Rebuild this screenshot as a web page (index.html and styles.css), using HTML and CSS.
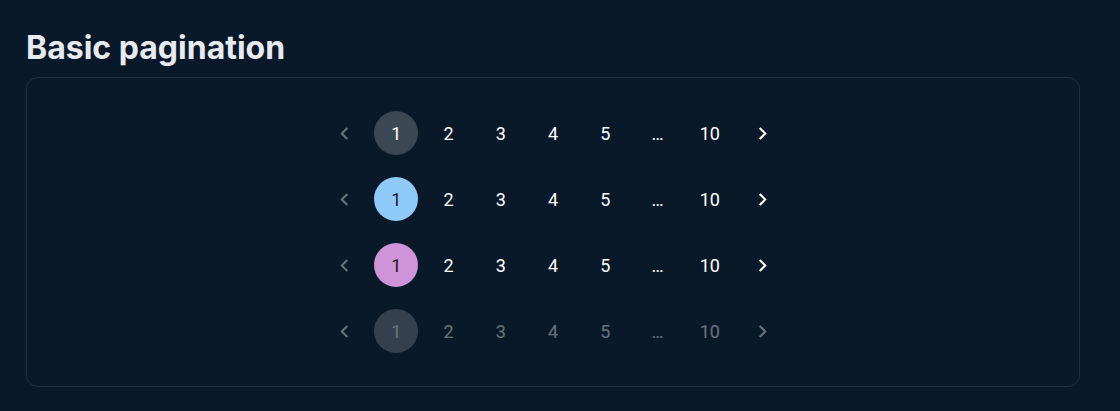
FILE: index.html
```html
<!DOCTYPE html>
<html lang="en">
<head>
  <meta charset="UTF-8">
  <title>Basic pagination</title>
  <link rel="stylesheet" href="styles.css">
</head>
<body>
  <h2 class="title">Basic pagination</h2>

  <div class="demo">
    <nav class="pagination">
      <span class="item arrow off"><svg viewBox="0 0 24 24"><path d="M15.41 7.41 14 6l-6 6 6 6 1.41-1.41L10.83 12z"/></svg></span>
      <span class="item current">1</span>
      <span class="item">2</span>
      <span class="item">3</span>
      <span class="item">4</span>
      <span class="item">5</span>
      <span class="item">…</span>
      <span class="item">10</span>
      <span class="item arrow"><svg viewBox="0 0 24 24"><path d="M10 6 8.59 7.41 13.17 12l-4.58 4.59L10 18l6-6z"/></svg></span>
    </nav>

    <nav class="pagination primary">
      <span class="item arrow off"><svg viewBox="0 0 24 24"><path d="M15.41 7.41 14 6l-6 6 6 6 1.41-1.41L10.83 12z"/></svg></span>
      <span class="item current">1</span>
      <span class="item">2</span>
      <span class="item">3</span>
      <span class="item">4</span>
      <span class="item">5</span>
      <span class="item">…</span>
      <span class="item">10</span>
      <span class="item arrow"><svg viewBox="0 0 24 24"><path d="M10 6 8.59 7.41 13.17 12l-4.58 4.59L10 18l6-6z"/></svg></span>
    </nav>

    <nav class="pagination secondary">
      <span class="item arrow off"><svg viewBox="0 0 24 24"><path d="M15.41 7.41 14 6l-6 6 6 6 1.41-1.41L10.83 12z"/></svg></span>
      <span class="item current">1</span>
      <span class="item">2</span>
      <span class="item">3</span>
      <span class="item">4</span>
      <span class="item">5</span>
      <span class="item">…</span>
      <span class="item">10</span>
      <span class="item arrow"><svg viewBox="0 0 24 24"><path d="M10 6 8.59 7.41 13.17 12l-4.58 4.59L10 18l6-6z"/></svg></span>
    </nav>

    <nav class="pagination disabled">
      <span class="item arrow"><svg viewBox="0 0 24 24"><path d="M15.41 7.41 14 6l-6 6 6 6 1.41-1.41L10.83 12z"/></svg></span>
      <span class="item current">1</span>
      <span class="item">2</span>
      <span class="item">3</span>
      <span class="item">4</span>
      <span class="item">5</span>
      <span class="item">…</span>
      <span class="item">10</span>
      <span class="item arrow"><svg viewBox="0 0 24 24"><path d="M10 6 8.59 7.41 13.17 12l-4.58 4.59L10 18l6-6z"/></svg></span>
    </nav>
  </div>
</body>
</html>
```

FILE: styles.css
```css
body {
  margin: 0;
  padding: 26px 40px 26px 26px;
  background-color: #0a1929;
  font-family: Roboto, 'Liberation Sans', sans-serif;
  color: #fff;
}

.title {
  font-family: Inter, 'Liberation Sans', sans-serif;
  font-size: 32px;
  font-weight: 700;
  line-height: 1.2;
  color: #e7ebf0;
  margin: 3px 0 10px 0;
}

.demo {
  display: flex;
  flex-direction: column;
  align-items: center;
  gap: 22px;
  padding: 33px 0;
  border: 1px solid #1f3042;
  border-radius: 12px;
}

.pagination {
  display: flex;
  gap: 8.25px;
}

.item {
  width: 44px;
  height: 44px;
  border-radius: 50%;
  display: flex;
  align-items: center;
  justify-content: center;
  font-size: 18px;
  font-weight: 400;
  color: #fff;
}

.arrow svg {
  width: 25px;
  height: 25px;
  fill: #fff;
}

.arrow.off svg {
  opacity: 0.38;
}

.current {
  background-color: rgba(255, 255, 255, 0.2);
}

.primary .current {
  background-color: #90caf9;
  color: rgba(0, 0, 0, 0.87);
}

.secondary .current {
  background-color: #ce93d8;
  color: rgba(0, 0, 0, 0.87);
}

.disabled {
  opacity: 0.38;
}

.disabled .current {
  background-color: rgba(255, 255, 255, 0.45);
}
```
